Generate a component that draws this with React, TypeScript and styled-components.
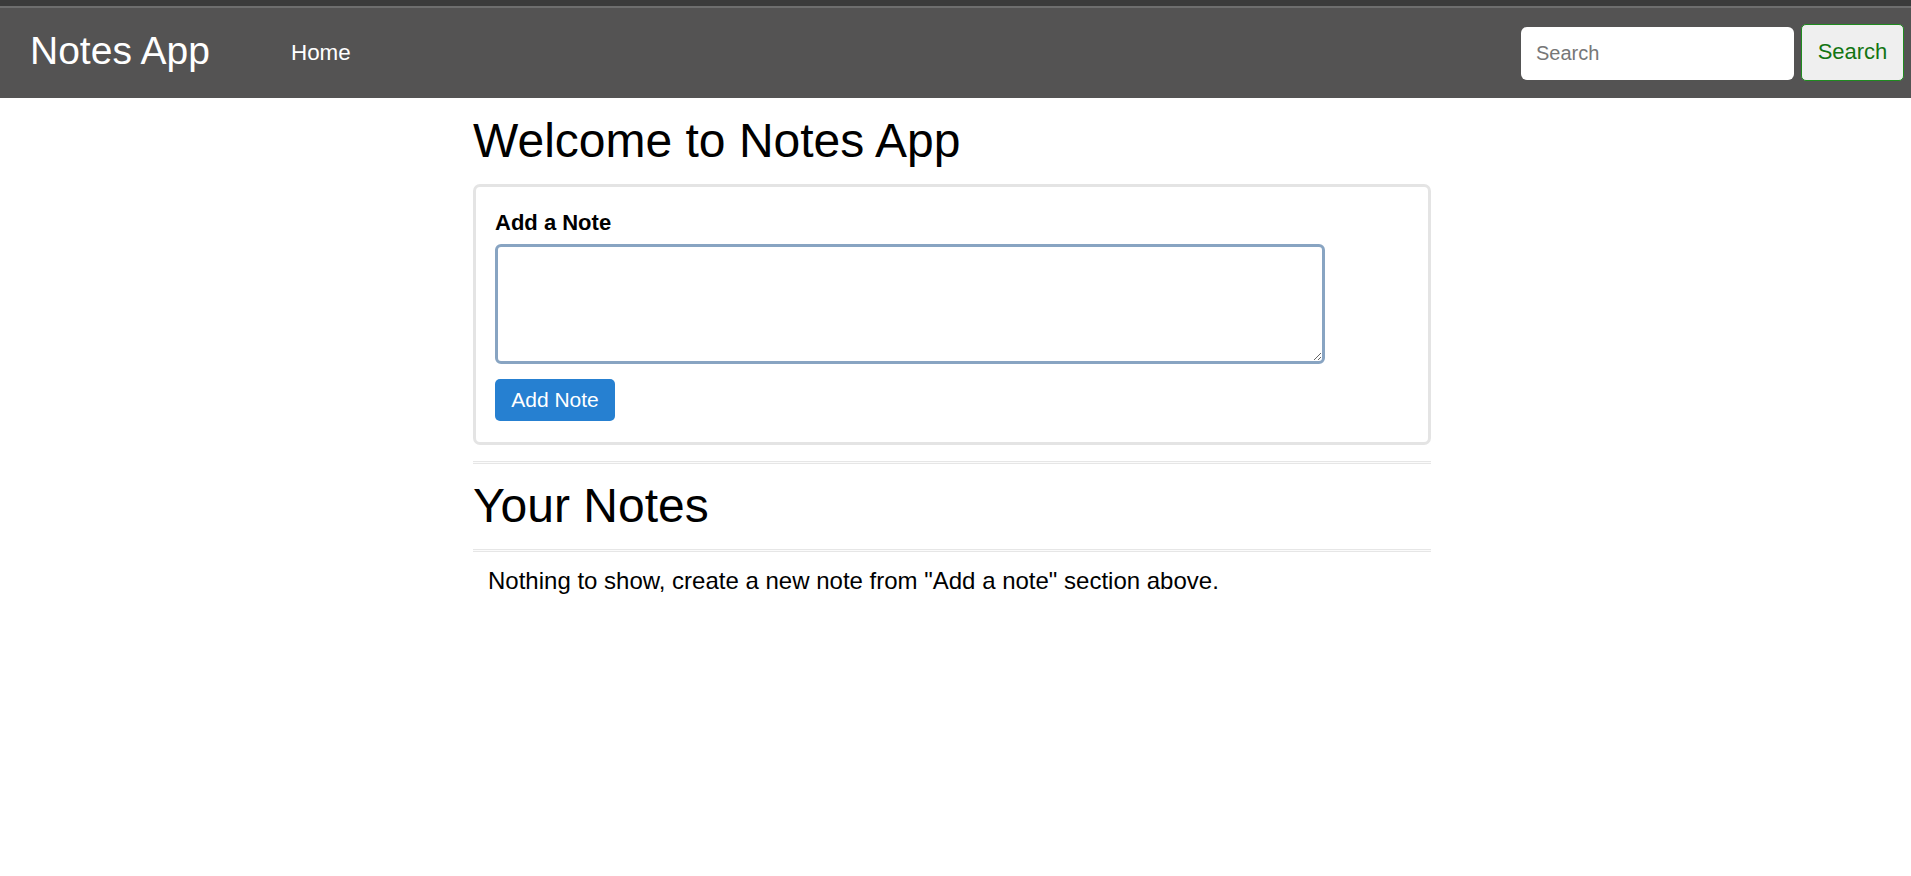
import React from 'react';
import styled, { createGlobalStyle } from 'styled-components';

const GlobalStyle = createGlobalStyle`
  html, body {
    margin: 0;
    padding: 0;
    background: #ffffff;
    font-family: "Liberation Sans", Arial, sans-serif;
    color: #000000;
  }
  * {
    box-sizing: border-box;
  }
`;

const TopStrip = styled.div`
  height: 6px;
  background: #3b3b3b;
`;

const NavBar = styled.nav`
  display: flex;
  align-items: center;
  height: 92px;
  padding: 0 7px 0 30px;
  background: #545353;
  border-top: 2px solid #6e6e6e;
`;

const Brand = styled.a`
  font-size: 39px;
  line-height: 39px;
  color: #ffffff;
  margin-bottom: 6px;
  text-decoration: none;
`;

const NavLink = styled.a`
  margin-left: 81px;
  margin-bottom: 1px;
  font-size: 22.4px;
  line-height: 22px;
  color: #ffffff;
  text-decoration: none;
`;

const SearchForm = styled.form`
  display: flex;
  align-items: center;
  gap: 7px;
  margin-left: auto;
`;

const SearchInput = styled.input`
  width: 273px;
  height: 53px;
  padding: 0 15px;
  border: none;
  border-radius: 6px;
  background: #ffffff;
  font-family: inherit;
  font-size: 20px;
  outline: none;

  &::placeholder {
    color: #777777;
  }
`;

const SearchButton = styled.button`
  width: 103px;
  height: 57px;
  margin-bottom: 2px;
  border: 1px solid #1f8b1f;
  border-radius: 5px;
  background: #efefef;
  color: #137513;
  font-family: inherit;
  font-size: 22px;
`;

const Main = styled.main`
  padding-right: 7px;
`;

const Container = styled.div`
  width: 958px;
  margin: 0 auto;
  padding-top: 14px;
`;

const Title = styled.h1<{ $gap?: number }>`
  margin: ${({ $gap }) => $gap ?? 0}px 0 0;
  font-size: 48px;
  font-weight: 400;
  line-height: 57px;
`;

const Card = styled.section`
  margin-top: 15px;
  padding: 23px 19px 21px;
  border: 3px solid #e4e4e4;
  border-radius: 7px;
`;

const Label = styled.label`
  display: block;
  font-size: 22px;
  font-weight: 700;
  line-height: 26px;
`;

const NoteArea = styled.textarea`
  display: block;
  width: 830px;
  height: 120px;
  margin-top: 8px;
  border: 3px solid #88a4c2;
  border-radius: 6px;
  font-family: inherit;
  font-size: 20px;
  resize: both;
  outline: none;
`;

const PrimaryButton = styled.button`
  display: block;
  width: 120px;
  height: 42px;
  margin-top: 15px;
  border: none;
  border-radius: 5px;
  background: #2680d1;
  color: #ffffff;
  font-family: inherit;
  font-size: 21px;
`;

const Rule = styled.div<{ $gap: number }>`
  height: 3px;
  margin-top: ${({ $gap }) => $gap}px;
  border-top: 1px solid #e6e6e6;
  border-bottom: 1px solid #e6e6e6;
  background: #fbfbfb;
`;

const EmptyText = styled.p`
  margin: 14px 0 0;
  padding-left: 15px;
  font-size: 24px;
  line-height: 29px;
`;

function App() {
  return (
    <>
      <GlobalStyle />
      <TopStrip />
      <NavBar>
        <Brand href="#">Notes App</Brand>
        <NavLink href="#">Home</NavLink>
        <SearchForm onSubmit={(e) => e.preventDefault()}>
          <SearchInput type="search" placeholder="Search" />
          <SearchButton type="submit">Search</SearchButton>
        </SearchForm>
      </NavBar>
      <Main>
        <Container>
          <Title>Welcome to Notes App</Title>
          <Card>
            <Label htmlFor="note">Add a Note</Label>
            <NoteArea id="note" />
            <PrimaryButton type="button">Add Note</PrimaryButton>
          </Card>
          <Rule $gap={16} />
          <Title $gap={13}>Your Notes</Title>
          <Rule $gap={15} />
          <EmptyText>Nothing to show, create a new note from "Add a note" section above.</EmptyText>
        </Container>
      </Main>
    </>
  );
}

export default App;
